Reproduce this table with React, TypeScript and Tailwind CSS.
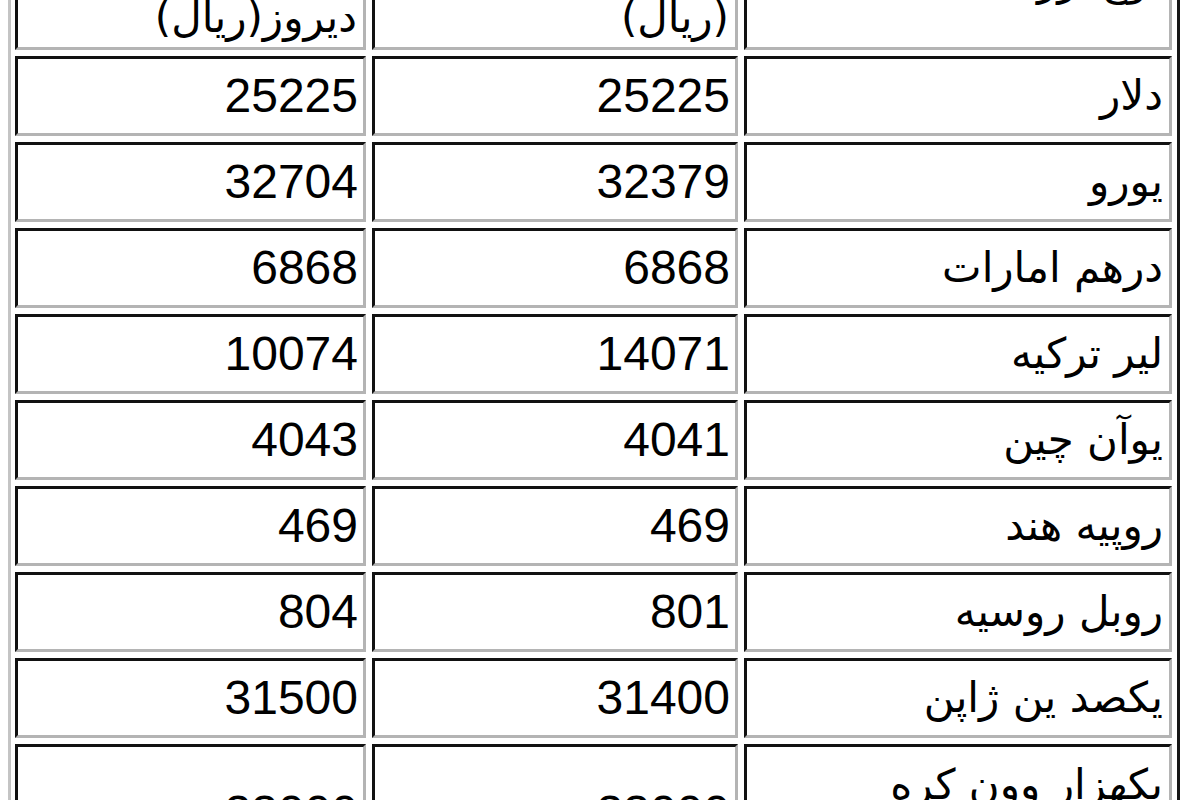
import React from "react";

const rows: { name: string[]; today: string; yesterday: string; tall?: boolean }[] = [
  { name: ["دلار"], today: "25225", yesterday: "25225" },
  { name: ["یورو"], today: "32379", yesterday: "32704" },
  { name: ["درهم امارات"], today: "6868", yesterday: "6868" },
  { name: ["لیر ترکیه"], today: "14071", yesterday: "10074" },
  { name: ["یوآن چین"], today: "4041", yesterday: "4043" },
  { name: ["روپیه هند"], today: "469", yesterday: "469" },
  { name: ["روبل روسیه"], today: "801", yesterday: "804" },
  { name: ["یکصد ین ژاپن"], today: "31400", yesterday: "31500" },
  { name: ["یکهزار وون کره", "جنوبی"], today: "23000", yesterday: "23000", tall: true },
];

const cell =
  "flex justify-end border-t-[3px] border-l-[3px] border-t-[#111] border-l-[#111] border-b-[3px] border-r-[3px] border-b-[#b4b4b4] border-r-[#b4b4b4] bg-white";

const fa = { fontFamily: '"DejaVu Sans", sans-serif' };
const num = { fontFamily: '"Liberation Sans", Arial, sans-serif' };

export default function App() {
  return (
    <div className="w-[1200px] h-[800px] overflow-hidden bg-white">
      <div className="-mt-[107px] ml-[8px] w-[1172px] border-l-[3px] border-l-[#c4c4c4] border-r-[3px] border-r-[#161616] pl-[4px] pr-[5px] pt-[7px]">
        <div className="grid grid-cols-[351px_366px_428px] gap-[6px]">
          {/* header */}
          <div className={`${cell} items-end h-[150px] overflow-hidden pr-[6px] pb-[4px]`}>
            <div dir="rtl" className="text-right text-[42px] leading-[50px] text-black" style={fa}>
              <div>نرخ</div>
              <div>بازار آزاد</div>
              <div>دیروز(ریال)</div>
            </div>
          </div>
          <div className={`${cell} items-end h-[150px] overflow-hidden pr-[6px] pb-[4px]`}>
            <div dir="rtl" className="text-right text-[42px] leading-[50px] text-black" style={fa}>
              <div>نرخ</div>
              <div>امروز</div>
              <div>(ریال)</div>
            </div>
          </div>
          <div className={`${cell} items-end h-[150px] overflow-hidden pr-[8px] pb-[41px]`}>
            <div dir="rtl" className="text-right text-[42px] leading-[50px] text-black" style={fa}>
              <div>نوع ارز</div>
            </div>
          </div>

          {rows.map((r, i) => (
            <React.Fragment key={i}>
              <div className={`${cell} items-center ${r.tall ? "h-[138px]" : "h-[80px]"} pr-[5px]`}>
                <span className="text-[48px] leading-none text-black" style={num}>
                  {r.yesterday}
                </span>
              </div>
              <div className={`${cell} items-center ${r.tall ? "h-[138px]" : "h-[80px]"} pr-[5px]`}>
                <span className="text-[48px] leading-none text-black" style={num}>
                  {r.today}
                </span>
              </div>
              <div className={`${cell} items-center ${r.tall ? "h-[138px]" : "h-[80px]"} pr-[6px]`}>
                <div
                  dir="rtl"
                  className={`text-right text-[42px] ${r.tall ? "leading-[56px]" : "leading-[40px]"} text-black`}
                  style={fa}
                >
                  {r.name.map((n, j) => (
                    <div key={j}>{n}</div>
                  ))}
                </div>
              </div>
            </React.Fragment>
          ))}
        </div>
      </div>
    </div>
  );
}
